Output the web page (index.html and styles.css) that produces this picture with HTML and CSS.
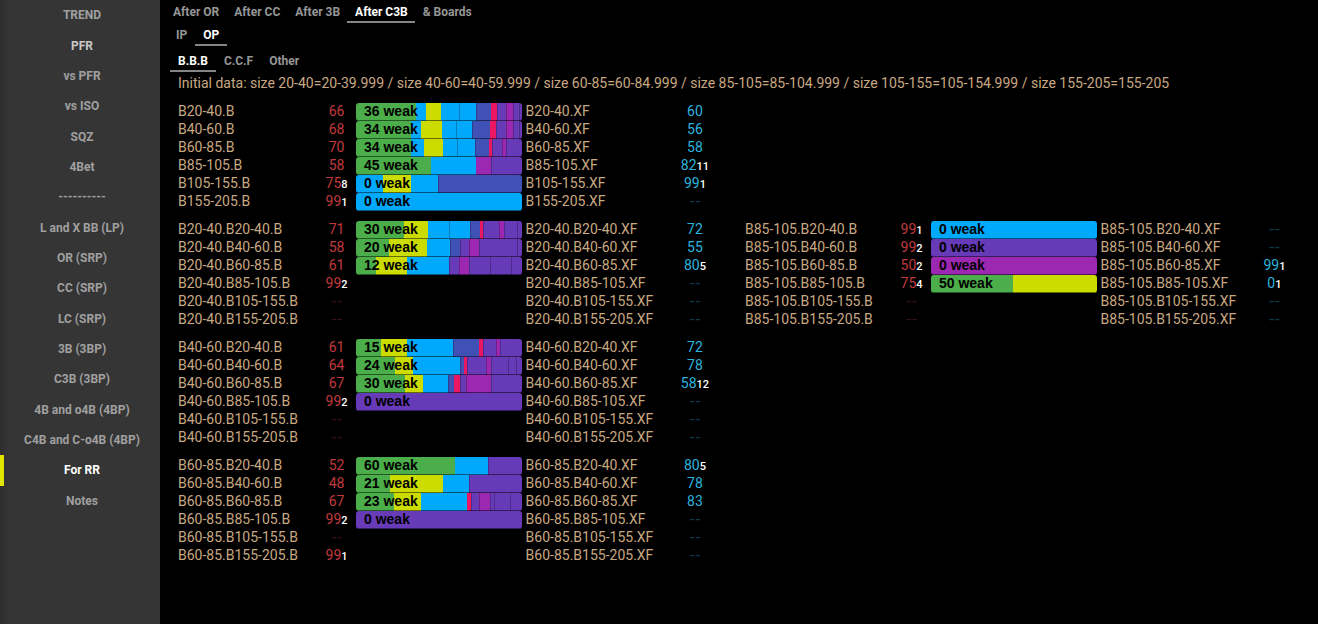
FILE: index.html
```html
<!DOCTYPE html>
<html lang="en">
<head>
<meta charset="utf-8">
<title>After C3B</title>
<link rel="stylesheet" href="styles.css">
</head>
<body>
<nav class="sidebar">
<a href="#">TREND</a>
<a href="#" class="bright">PFR</a>
<a href="#">vs PFR</a>
<a href="#">vs ISO</a>
<a href="#">SQZ</a>
<a href="#">4Bet</a>
<span>----------</span>
<a href="#">L and X BB (LP)</a>
<a href="#">OR (SRP)</a>
<a href="#">CC (SRP)</a>
<a href="#">LC (SRP)</a>
<a href="#">3B (3BP)</a>
<a href="#">C3B (3BP)</a>
<a href="#">4B and o4B (4BP)</a>
<a href="#">C4B and C-o4B (4BP)</a>
<a href="#" class="active">For RR</a>
<a href="#">Notes</a>
</nav>
<main class="main">
<div class="tabs tabs-street"><button>After OR</button><button>After CC</button><button>After 3B</button><button class="active">After C3B</button><button>&amp; Boards</button></div>
<div class="tabs tabs-position"><button>IP</button><button class="active">OP</button></div>
<div class="tabs tabs-lines"><button class="active">B.B.B</button><button>C.C.F</button><button>Other</button></div>
<p class="note">Initial data: size 20-40=20-39.999 / size 40-60=40-59.999 / size 60-85=60-84.999 / size 85-105=85-104.999 / size 105-155=105-154.999 / size 155-205=155-205</p>

<section class="block">
<table class="stats">
<colgroup><col class="c-bet"><col class="c-num"><col class="c-bar"><col class="c-fold"><col class="c-num"><col></colgroup>
<tr><td>B20-40.B</td><td class="bet">66</td><td><div class="bar"><b>36 weak</b><i class="g" style="flex-grow:180"></i><i class="s" style="flex-grow:30"></i><i class="y" style="flex-grow:46"></i><i class="s" style="flex-grow:52"></i><i class="s" style="flex-grow:52"></i><i class="n" style="flex-grow:46"></i><i class="r" style="flex-grow:18"></i><i class="p" style="flex-grow:26"></i><i class="m" style="flex-grow:22"></i><i class="p" style="flex-grow:18"></i><i class="p" style="flex-grow:7"></i></div></td><td>B20-40.XF</td><td class="fold">60</td></tr>
<tr><td>B40-60.B</td><td class="bet">68</td><td><div class="bar"><b>34 weak</b><i class="g" style="flex-grow:165"></i><i class="s" style="flex-grow:30"></i><i class="y" style="flex-grow:63"></i><i class="s" style="flex-grow:41"></i><i class="s" style="flex-grow:50"></i><i class="n" style="flex-grow:54"></i><i class="r" style="flex-grow:17"></i><i class="p" style="flex-grow:31"></i><i class="m" style="flex-grow:21"></i><i class="p" style="flex-grow:16"></i><i class="p" style="flex-grow:9"></i></div></td><td>B40-60.XF</td><td class="fold">56</td></tr>
<tr><td>B60-85.B</td><td class="bet">70</td><td><div class="bar"><b>34 weak</b><i class="g" style="flex-grow:165"></i><i class="s" style="flex-grow:39"></i><i class="y" style="flex-grow:57"></i><i class="s" style="flex-grow:41"></i><i class="s" style="flex-grow:56"></i><i class="n" style="flex-grow:42"></i><i class="r" style="flex-grow:8"></i><i class="p" style="flex-grow:31"></i><i class="m" style="flex-grow:10"></i><i class="p" style="flex-grow:48"></i></div></td><td>B60-85.XF</td><td class="fold">58</td></tr>
<tr><td>B85-105.B</td><td class="bet">58</td><td><div class="bar"><b>45 weak</b><i class="g" style="flex-grow:225"></i><i class="s" style="flex-grow:135"></i><i class="m" style="flex-grow:45"></i><i class="p" style="flex-grow:92"></i></div></td><td>B85-105.XF</td><td class="fold">82<small>11</small></td></tr>
<tr><td>B105-155.B</td><td class="bet">75<small>8</small></td><td><div class="bar"><b>0 weak</b><i class="s" style="flex-grow:81"></i><i class="y" style="flex-grow:84"></i><i class="s" style="flex-grow:81"></i><i class="n" style="flex-grow:251"></i></div></td><td>B105-155.XF</td><td class="fold">99<small>1</small></td></tr>
<tr><td>B155-205.B</td><td class="bet">99<small>1</small></td><td><div class="bar"><b>0 weak</b><i class="s" style="flex-grow:1"></i></div></td><td>B155-205.XF</td><td class="fold none">--</td></tr>
</table>
</section>

<section class="block">
<table class="stats">
<colgroup><col class="c-bet"><col class="c-num"><col class="c-bar"><col class="c-fold"><col class="c-num"><col></colgroup>
<tr><td>B20-40.B20-40.B</td><td class="bet">71</td><td><div class="bar"><b>30 weak</b><i class="g" style="flex-grow:144"></i><i class="y" style="flex-grow:72"></i><i class="s" style="flex-grow:64"></i><i class="s" style="flex-grow:61"></i><i class="n" style="flex-grow:31"></i><i class="r" style="flex-grow:10"></i><i class="p" style="flex-grow:48"></i><i class="m" style="flex-grow:14"></i><i class="p" style="flex-grow:40"></i><i class="p" style="flex-grow:13"></i></div></td><td>B20-40.B20-40.XF</td><td class="fold">72</td></tr>
<tr><td>B20-40.B40-60.B</td><td class="bet">58</td><td><div class="bar"><b>20 weak</b><i class="g" style="flex-grow:99"></i><i class="y" style="flex-grow:114"></i><i class="s" style="flex-grow:70"></i><i class="n" style="flex-grow:30"></i><i class="p" style="flex-grow:26"></i><i class="m" style="flex-grow:30"></i><i class="p" style="flex-grow:115"></i><i class="p" style="flex-grow:13"></i></div></td><td>B20-40.B40-60.XF</td><td class="fold">55</td></tr>
<tr><td>B20-40.B60-85.B</td><td class="bet">61</td><td><div class="bar"><b>12 weak</b><i class="g" style="flex-grow:60"></i><i class="y" style="flex-grow:93"></i><i class="s" style="flex-grow:127"></i><i class="p" style="flex-grow:29"></i><i class="m" style="flex-grow:30"></i><i class="p" style="flex-grow:64"></i><i class="p" style="flex-grow:63"></i><i class="p" style="flex-grow:31"></i></div></td><td>B20-40.B60-85.XF</td><td class="fold">80<small>5</small></td></tr>
<tr><td>B20-40.B85-105.B</td><td class="bet">99<small>2</small></td><td></td><td>B20-40.B85-105.XF</td><td class="fold none">--</td></tr>
<tr><td>B20-40.B105-155.B</td><td class="bet none">--</td><td></td><td>B20-40.B105-155.XF</td><td class="fold none">--</td></tr>
<tr><td>B20-40.B155-205.B</td><td class="bet none">--</td><td></td><td>B20-40.B155-205.XF</td><td class="fold none">--</td></tr>
</table>
<table class="stats">
<colgroup><col class="c-bet-wide"><col class="c-num"><col class="c-bar"><col class="c-fold-wide"><col class="c-num"><col></colgroup>
<tr><td>B85-105.B20-40.B</td><td class="bet">99<small>1</small></td><td><div class="bar"><b>0 weak</b><i class="s" style="flex-grow:1"></i></div></td><td>B85-105.B20-40.XF</td><td class="fold none">--</td></tr>
<tr><td>B85-105.B40-60.B</td><td class="bet">99<small>2</small></td><td><div class="bar"><b>0 weak</b><i class="p" style="flex-grow:1"></i></div></td><td>B85-105.B40-60.XF</td><td class="fold none">--</td></tr>
<tr><td>B85-105.B60-85.B</td><td class="bet">50<small>2</small></td><td><div class="bar"><b>0 weak</b><i class="m" style="flex-grow:1"></i></div></td><td>B85-105.B60-85.XF</td><td class="fold">99<small>1</small></td></tr>
<tr><td>B85-105.B85-105.B</td><td class="bet">75<small>4</small></td><td><div class="bar"><b>50 weak</b><i class="g" style="flex-grow:245"></i><i class="y" style="flex-grow:251"></i></div></td><td>B85-105.B85-105.XF</td><td class="fold">0<small>1</small></td></tr>
<tr><td>B85-105.B105-155.B</td><td class="bet none">--</td><td></td><td>B85-105.B105-155.XF</td><td class="fold none">--</td></tr>
<tr><td>B85-105.B155-205.B</td><td class="bet none">--</td><td></td><td>B85-105.B155-205.XF</td><td class="fold none">--</td></tr>
</table>
</section>

<section class="block">
<table class="stats">
<colgroup><col class="c-bet"><col class="c-num"><col class="c-bar"><col class="c-fold"><col class="c-num"><col></colgroup>
<tr><td>B40-60.B20-40.B</td><td class="bet">61</td><td><div class="bar"><b>15 weak</b><i class="g" style="flex-grow:75"></i><i class="y" style="flex-grow:78"></i><i class="s" style="flex-grow:139"></i><i class="n" style="flex-grow:78"></i><i class="r" style="flex-grow:12"></i><i class="p" style="flex-grow:38"></i><i class="m" style="flex-grow:12"></i><i class="p" style="flex-grow:65"></i></div></td><td>B40-60.B20-40.XF</td><td class="fold">72</td></tr>
<tr><td>B40-60.B40-60.B</td><td class="bet">64</td><td><div class="bar"><b>24 weak</b><i class="g" style="flex-grow:117"></i><i class="y" style="flex-grow:54"></i><i class="s" style="flex-grow:142"></i><i class="n" style="flex-grow:11"></i><i class="r" style="flex-grow:10"></i><i class="p" style="flex-grow:57"></i><i class="m" style="flex-grow:14"></i><i class="p" style="flex-grow:52"></i><i class="p" style="flex-grow:24"></i><i class="p" style="flex-grow:16"></i></div></td><td>B40-60.B40-60.XF</td><td class="fold">78</td></tr>
<tr><td>B40-60.B60-85.B</td><td class="bet">67</td><td><div class="bar"><b>30 weak</b><i class="g" style="flex-grow:147"></i><i class="y" style="flex-grow:54"></i><i class="s" style="flex-grow:75"></i><i class="n" style="flex-grow:18"></i><i class="r" style="flex-grow:18"></i><i class="p" style="flex-grow:17"></i><i class="m" style="flex-grow:77"></i><i class="p" style="flex-grow:91"></i></div></td><td>B40-60.B60-85.XF</td><td class="fold">58<small>12</small></td></tr>
<tr><td>B40-60.B85-105.B</td><td class="bet">99<small>2</small></td><td><div class="bar"><b>0 weak</b><i class="p" style="flex-grow:1"></i></div></td><td>B40-60.B85-105.XF</td><td class="fold none">--</td></tr>
<tr><td>B40-60.B105-155.B</td><td class="bet none">--</td><td></td><td>B40-60.B105-155.XF</td><td class="fold none">--</td></tr>
<tr><td>B40-60.B155-205.B</td><td class="bet none">--</td><td></td><td>B40-60.B155-205.XF</td><td class="fold none">--</td></tr>
</table>
</section>

<section class="block">
<table class="stats">
<colgroup><col class="c-bet"><col class="c-num"><col class="c-bar"><col class="c-fold"><col class="c-num"><col></colgroup>
<tr><td>B60-85.B20-40.B</td><td class="bet">52</td><td><div class="bar"><b>60 weak</b><i class="g" style="flex-grow:298"></i><i class="s" style="flex-grow:99"></i><i class="p" style="flex-grow:100"></i></div></td><td>B60-85.B20-40.XF</td><td class="fold">80<small>5</small></td></tr>
<tr><td>B60-85.B40-60.B</td><td class="bet">48</td><td><div class="bar"><b>21 weak</b><i class="g" style="flex-grow:102"></i><i class="y" style="flex-grow:159"></i><i class="s" style="flex-grow:79"></i><i class="p" style="flex-grow:157"></i></div></td><td>B60-85.B40-60.XF</td><td class="fold">78</td></tr>
<tr><td>B60-85.B60-85.B</td><td class="bet">67</td><td><div class="bar"><b>23 weak</b><i class="g" style="flex-grow:114"></i><i class="y" style="flex-grow:81"></i><i class="s" style="flex-grow:139"></i><i class="r" style="flex-grow:12"></i><i class="p" style="flex-grow:24"></i><i class="m" style="flex-grow:32"></i><i class="p" style="flex-grow:12"></i><i class="p" style="flex-grow:49"></i><i class="p" style="flex-grow:34"></i></div></td><td>B60-85.B60-85.XF</td><td class="fold">83</td></tr>
<tr><td>B60-85.B85-105.B</td><td class="bet">99<small>2</small></td><td><div class="bar"><b>0 weak</b><i class="p" style="flex-grow:1"></i></div></td><td>B60-85.B85-105.XF</td><td class="fold none">--</td></tr>
<tr><td>B60-85.B105-155.B</td><td class="bet none">--</td><td></td><td>B60-85.B105-155.XF</td><td class="fold none">--</td></tr>
<tr><td>B60-85.B155-205.B</td><td class="bet">99<small>1</small></td><td></td><td>B60-85.B155-205.XF</td><td class="fold none">--</td></tr>
</table>
</section>
</main>
</body>
</html>
```
FILE: styles.css
```css
* { box-sizing: border-box; }

body {
  display: flex;
  min-height: 100vh;
  margin: 0;
  background: #000;
  color: #c8a882;
  font: 14px/18px Roboto, sans-serif;
}

.sidebar {
  flex: none;
  display: grid;
  grid-auto-rows: 1fr;
  align-self: stretch;
  align-content: start;
  width: 160px;
  padding-bottom: 108px;
  background: linear-gradient(90deg, #2d2d2d, #353535 8px);
  color: #a0a0a0;
  font-size: 12px;
  font-weight: 700;
}

.sidebar > * {
  display: flex;
  align-items: center;
  justify-content: center;
  padding-left: 4px;
  border-left: 4px solid transparent;
  padding-right: 4px;
  color: inherit;
  text-decoration: none;
}

.sidebar .bright { color: #c8c8c8; }
.sidebar .active { color: #fff; border-left-color: #e1e600; }

.main { flex: 1; min-width: 0; }

.tabs { display: flex; }
.tabs-street { padding-left: 5px; }
.tabs-position { padding-left: 8px; }
.tabs-lines { padding-left: 10px; margin-top: 3px; }

.tabs button {
  height: 23px;
  padding: 2px 8px 0;
  border: 0;
  border-bottom: 2px solid transparent;
  background: none;
  color: #969696;
  font: 700 12px/18px Roboto, sans-serif;
}

.tabs-street button { padding-right: 7px; }
.tabs .active { color: #fff; border-bottom-color: #858585; }

.note { margin: 2px 0 10px; padding-left: 18px; }

.block {
  display: grid;
  grid-template-columns: 1fr 1fr;
  margin-bottom: 10px;
  padding: 0 6px 0 18px;
}

.stats { width: 100%; table-layout: fixed; border-collapse: collapse; }
.stats td { height: 18px; padding: 0; white-space: nowrap; }
.stats td:nth-child(3) { padding-top: 1px; }
.stats td:nth-child(4) { padding-left: 4px; }

.c-bet { width: 24.2%; }
.c-bet-wide { width: 25.6%; }
.c-num { width: 7.2%; }
.c-bar { width: 29.2%; }
.c-fold { width: 26.8%; }
.c-fold-wide { width: 27.6%; }

.stats .bet, .stats .fold { padding-left: 2px; text-align: center; }
.bet { color: #c03a3e; }
.fold { color: #2cb4de; }
.stats .none { font: 16px/14px "DejaVu Sans", sans-serif; }
.bet.none { color: #3a1213; }
.fold.none { color: #0e3a48; }
.stats small { color: #fff; font-size: 11px; font-weight: 500; line-height: 1; }

.bar {
  position: relative;
  display: flex;
  height: 18px;
  margin-bottom: -1px;
  overflow: hidden;
  border-radius: 3px;
}

.bar::after {
  content: "";
  position: absolute;
  inset: 0;
  border-bottom: 1px solid rgba(0, 0, 0, .5);
  border-radius: 3px;
}

.bar b {
  position: absolute;
  left: 8px;
  color: #000;
  font: 700 14px/17px "Liberation Sans", sans-serif;
}

.bar i { flex: 0 0 0; }
.g { background: #4bae4a; }
.s { background: #00a9fb; }
.y { background: #ccdc00; }
.n { background: #3f51b5; }
.r { background: #ec1763; }
.p { background: #673ab7; }
.m { background: #9c27b0; }
.bar .s + .s,
.bar i + .n,
.bar i + .p,
.bar .p + .m { box-shadow: inset 1px 0 rgba(0, 0, 0, .25); }
```
